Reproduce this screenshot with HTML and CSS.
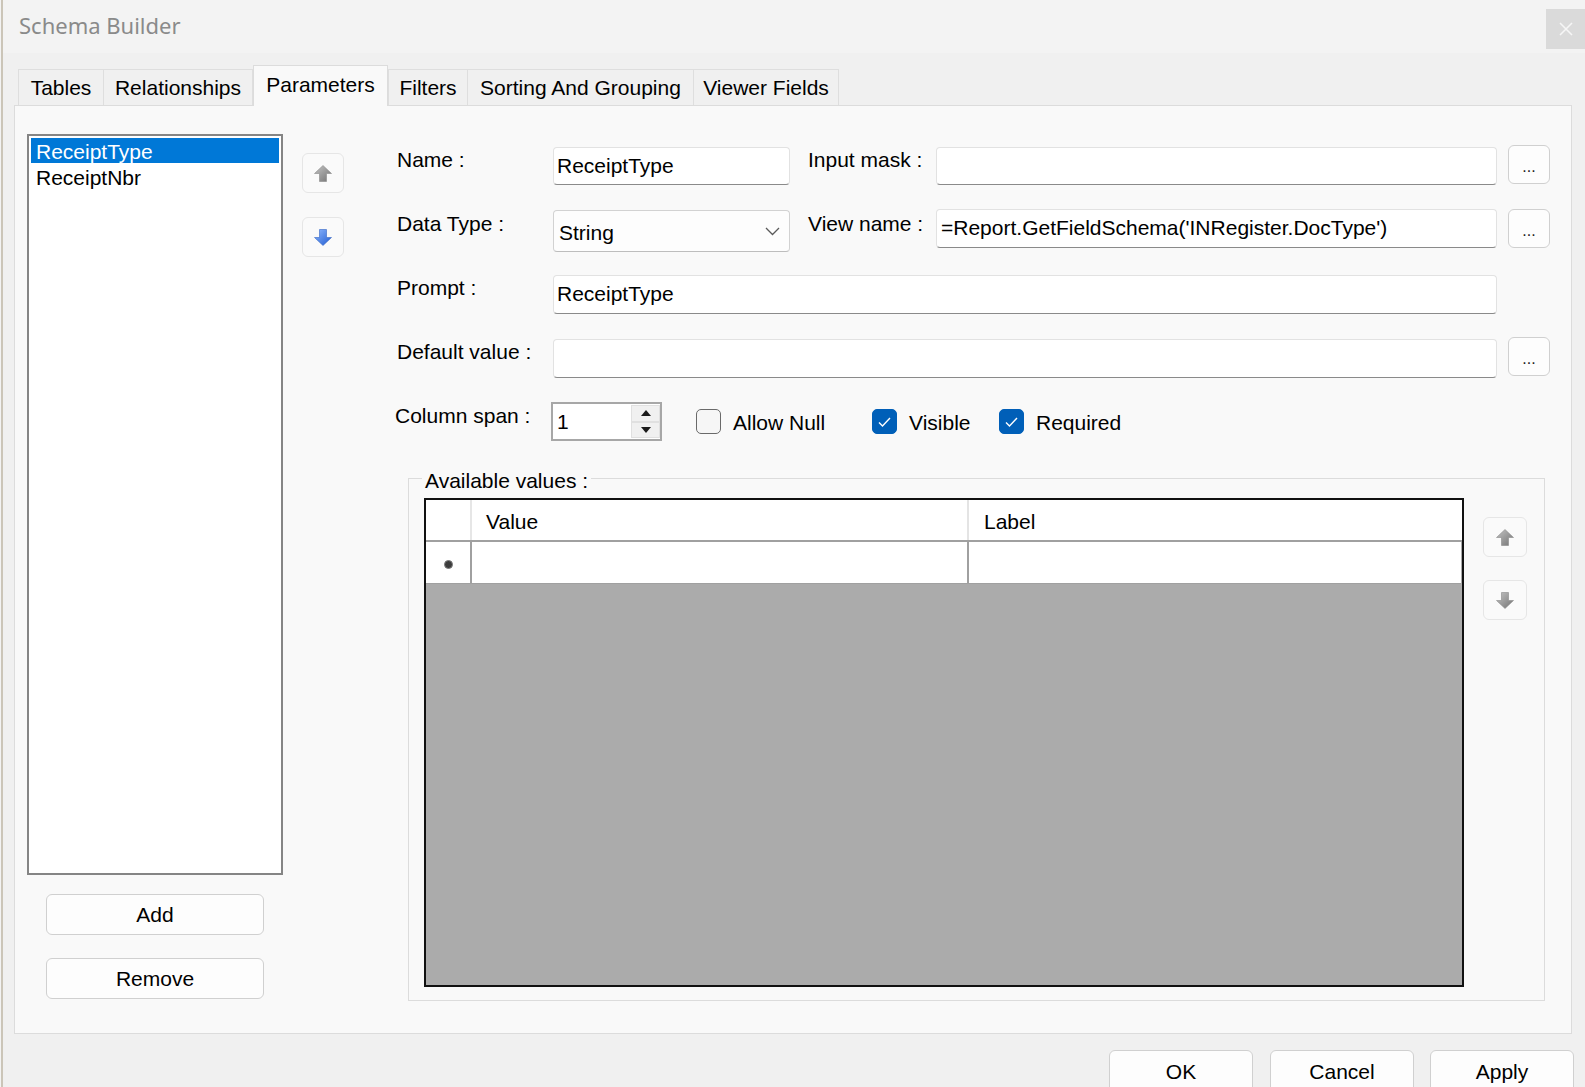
FILE: index.html
```html
<!DOCTYPE html>
<html lang="en">
<head>
<meta charset="utf-8">
<title>Schema Builder</title>
<link rel="stylesheet" href="styles.css">
</head>
<body>
<div class="window">
  <div class="titlebar">
    <span class="title">Schema Builder</span>
    <div class="close">
      <svg width="14" height="14" viewBox="0 0 14 14"><path d="M1 1 L13 13 M13 1 L1 13" stroke="#f6f6f6" stroke-width="1.6" fill="none"/></svg>
    </div>
  </div>

  <div class="tabs">
    <div class="tab tab-tables">Tables</div>
    <div class="tab tab-rel">Relationships</div>
    <div class="tab tab-params active">Parameters</div>
    <div class="tab tab-filters">Filters</div>
    <div class="tab tab-sort">Sorting And Grouping</div>
    <div class="tab tab-viewer">Viewer Fields</div>
  </div>

  <div class="panel">
    <div class="left-col">
      <div class="listbox">
        <div class="item selected">ReceiptType</div>
        <div class="item">ReceiptNbr</div>
      </div>
      <div class="btn side-btn add">Add</div>
      <div class="btn side-btn remove">Remove</div>
    </div>

    <div class="arrow-col">
      <div class="arrow-btn">
        <svg width="18" height="17" viewBox="0 0 18 17"><defs><linearGradient id="ga" x1="0" y1="0" x2="1" y2="1"><stop offset="0" stop-color="#c4c4c4"/><stop offset="1" stop-color="#727272"/></linearGradient></defs><polygon points="9,0.5 17.5,8.5 12.5,8.5 12.5,16.5 5.5,16.5 5.5,8.5 0.5,8.5" fill="url(#ga)" stroke="#8a8a8a" stroke-width="0.6"/></svg>
      </div>
      <div class="arrow-btn">
        <svg width="18" height="17" viewBox="0 0 18 17"><defs><linearGradient id="gb" x1="0" y1="0" x2="1" y2="1"><stop offset="0" stop-color="#8fb8ff"/><stop offset="1" stop-color="#1f5bd0"/></linearGradient></defs><polygon points="5.5,0.5 12.5,0.5 12.5,8.5 17.5,8.5 9,16.5 0.5,8.5 5.5,8.5" fill="url(#gb)" stroke="#3667c4" stroke-width="0.6"/></svg>
      </div>
    </div>

    <div class="form">
      <div class="form-grid">
        <div class="lbl">Name :</div>
        <div class="field">ReceiptType</div>
        <div class="lbl lbl2">Input mask :</div>
        <div class="field"></div>
        <div class="btn dots">...</div>

        <div class="lbl">Data Type :</div>
        <div class="combo"><span>String</span>
          <svg width="15" height="9" viewBox="0 0 15 9"><polyline points="1,1 7.5,7.5 14,1" fill="none" stroke="#5a5a5a" stroke-width="1.3"/></svg>
        </div>
        <div class="lbl lbl2">View name :</div>
        <div class="field field-up">=Report.GetFieldSchema('INRegister.DocType')</div>
        <div class="btn dots">...</div>

        <div class="lbl">Prompt :</div>
        <div class="field field-wide">ReceiptType</div>

        <div class="lbl">Default value :</div>
        <div class="field field-wide"></div>
        <div class="btn dots">...</div>

        <div class="lbl lbl-span">Column span :</div>
        <div class="opts">
          <div class="spin">
            <div class="spin-val">1</div>
            <div class="spin-btns">
              <div class="spin-b"><svg width="10" height="6" viewBox="0 0 10 6"><polygon points="5,0 10,6 0,6" fill="#1a1a1a"/></svg></div>
              <div class="spin-b"><svg width="10" height="6" viewBox="0 0 10 6"><polygon points="0,0 10,0 5,6" fill="#1a1a1a"/></svg></div>
            </div>
          </div>
          <div class="check check-null"><span class="box"></span><span class="check-text">Allow Null</span></div>
          <div class="check check-visible"><span class="box on"><svg width="15" height="12" viewBox="0 0 15 12"><polyline points="2,6.5 5.5,10 13,2" fill="none" stroke="#fff" stroke-width="1.4"/></svg></span><span class="check-text">Visible</span></div>
          <div class="check"><span class="box on"><svg width="15" height="12" viewBox="0 0 15 12"><polyline points="2,6.5 5.5,10 13,2" fill="none" stroke="#fff" stroke-width="1.4"/></svg></span><span class="check-text">Required</span></div>
        </div>
      </div>

      <div class="group">
        <div class="group-label">Available values :</div>
        <div class="group-body">
          <div class="grid">
            <div class="grow ghead">
              <div class="gc rh"></div>
              <div class="gc gval">Value</div>
              <div class="gc glab">Label</div>
            </div>
            <div class="grow gdata">
              <div class="gc rh"><span class="dot"></span></div>
              <div class="gc gval"></div>
              <div class="gc glab"></div>
            </div>
          </div>
          <div class="grid-side">
            <div class="arrow-btn wide">
              <svg width="18" height="17" viewBox="0 0 18 17"><defs><linearGradient id="gc" x1="0" y1="0" x2="1" y2="1"><stop offset="0" stop-color="#c4c4c4"/><stop offset="1" stop-color="#727272"/></linearGradient></defs><polygon points="9,0.5 17.5,8.5 12.5,8.5 12.5,16.5 5.5,16.5 5.5,8.5 0.5,8.5" fill="url(#gc)" stroke="#8a8a8a" stroke-width="0.6"/></svg>
            </div>
            <div class="arrow-btn wide">
              <svg width="18" height="17" viewBox="0 0 18 17"><defs><linearGradient id="gd" x1="0" y1="0" x2="1" y2="1"><stop offset="0" stop-color="#c4c4c4"/><stop offset="1" stop-color="#727272"/></linearGradient></defs><polygon points="5.5,0.5 12.5,0.5 12.5,8.5 17.5,8.5 9,16.5 0.5,8.5 5.5,8.5" fill="url(#gd)" stroke="#8a8a8a" stroke-width="0.6"/></svg>
            </div>
          </div>
        </div>
      </div>
    </div>
  </div>

  <div class="footer">
    <div class="btn foot-btn ok">OK</div>
    <div class="btn foot-btn">Cancel</div>
    <div class="btn foot-btn">Apply</div>
  </div>
</div>
</body>
</html>
```

FILE: styles.css
```css
* { box-sizing: border-box; }
html, body { margin: 0; padding: 0; }
body {
  width: 1585px;
  height: 1087px;
  overflow: hidden;
  background: #f3f3f3;
  font-family: "Liberation Sans", Arial, sans-serif;
  font-size: 21px;
  color: #000;
}
.window {
  margin-left: 1px;
  width: 1584px;
  height: 1087px;
  border-left: 2px solid #cbc5b8;
  background: #f0f0f0;
}

/* title bar */
.titlebar {
  height: 53px;
  background: #f3f3f3;
  display: flex;
  align-items: flex-start;
}
.title {
  font-family: "Noto Sans", sans-serif;
  font-size: 22px;
  line-height: 30px;
  padding: 10px 0 0 16px;
  color: #8a8a8a;
}
.close {
  margin-left: auto;
  margin-top: 9px;
  width: 39px;
  height: 40px;
  background: #dadada;
  display: flex;
  align-items: center;
  justify-content: center;
}

/* tabs */
.tabs {
  display: flex;
  align-items: flex-end;
  height: 52px;
  padding-left: 15px;
}
.tab {
  height: 36px;
  line-height: 35px;
  text-align: center;
  border: 1px solid #dedede;
  border-bottom: none;
  background: #f0f0f0;
  white-space: nowrap;
}
.tab-tables { width: 86px; }
.tab-rel { width: 149px; border-left: none; }
.tab-params { width: 135px; }
.tab-filters { width: 80px; }
.tab-sort { width: 226px; border-left: none; }
.tab-viewer { width: 145px; border-left: none; }
.tab.active {
  height: 41px;
  margin-bottom: -1px;
  padding-top: 1px;
  background: #f9f9f9;
  border-color: #dcdcdc;
  position: relative;
  z-index: 1;
}

/* panel */
.panel {
  margin-left: 11px;
  width: 1558px;
  height: 929px;
  border: 1px solid #dcdcdc;
  background: #f9f9f9;
  display: flex;
  align-items: flex-start;
  padding: 28px 0 0 12px;
}
.left-col {
  width: 256px;
  display: flex;
  flex-direction: column;
}
.listbox {
  height: 741px;
  border: 2px solid #858585;
  background: #fff;
  padding: 2px;
}
.item {
  height: 26px;
  line-height: 27px;
  padding-left: 5px;
  white-space: nowrap;
}
.item.selected {
  background: #0078d7;
  color: #fff;
  height: 25px;
  margin-bottom: 1px;
}

.btn {
  background: #fdfdfd;
  border: 1px solid #d0d0d0;
  border-radius: 6px;
  text-align: center;
}
.side-btn {
  margin-left: 19px;
  width: 218px;
  height: 41px;
  line-height: 39px;
}
.add { margin-top: 19px; }
.remove { margin-top: 23px; }

.arrow-col {
  margin-left: 19px;
  margin-top: 19px;
  width: 42px;
  display: flex;
  flex-direction: column;
  gap: 24px;
}
.arrow-btn {
  width: 42px;
  height: 40px;
  background: #fafafa;
  border: 1px solid #e6e6e6;
  border-radius: 6px;
  display: flex;
  align-items: center;
  justify-content: center;
}
.arrow-btn.wide { width: 44px; }

/* form */
.form {
  margin-left: 53px;
  margin-top: 13px;
  width: 1153px;
}
.form-grid {
  display: grid;
  grid-template-columns: 156px 237px 146px 561px 53px;
  grid-template-rows: 64px 64px 64px 64px 40px;
  align-items: start;
}
.lbl {
  line-height: 24px;
  padding-top: 1px;
  white-space: nowrap;
  grid-column: 1;
}
.lbl2 { grid-column: 3; padding-left: 18px; }
.lbl-span { margin-left: -2px; }
.field {
  height: 38px;
  line-height: 36px;
  background: #fff;
  border: 1px solid #e2e2e2;
  border-bottom-color: #8a8a8a;
  border-radius: 4px;
  padding-left: 3px;
  white-space: nowrap;
  overflow: hidden;
}
.field-up { margin-top: -2px; height: 39px; padding-left: 4px; }
.field-wide { grid-column: 2 / 5; height: 39px; }
.combo {
  margin-top: -1px;
  height: 42px;
  background: #fdfdfd;
  border: 1px solid #d2d2d2;
  border-bottom-color: #bdbdbd;
  border-radius: 4px;
  display: flex;
  align-items: center;
  justify-content: space-between;
  padding: 3px 9px 0 5px;
}
.combo svg { margin-top: -3px; }
.dots {
  grid-column: 5;
  justify-self: end;
  width: 42px;
  height: 39px;
  margin-top: -2px;
  font-size: 16px;
  line-height: 30px;
  padding-top: 6px;
  color: #222;
}

.opts {
  grid-column: 2 / 6;
  display: flex;
  align-items: center;
  height: 39px;
  margin-top: -1px;
}
.spin {
  margin-left: -2px;
  width: 111px;
  height: 39px;
  border: 2px solid #a7a7a7;
  background: #fff;
  display: flex;
}
.spin-val {
  flex: 1;
  padding-left: 4px;
  line-height: 35px;
}
.spin-btns {
  width: 29px;
  display: flex;
  flex-direction: column;
  padding: 1px 0 1px 0;
}
.spin-b {
  flex: 1;
  background: #f0f0f0;
  border: 1px solid #e0e0e0;
  display: flex;
  align-items: center;
  justify-content: center;
}
.check {
  display: flex;
  align-items: center;
  gap: 12px;
  height: 39px;
}
.check-null { margin-left: 34px; width: 176px; }
.check-visible { width: 127px; }
.box {
  width: 25px;
  height: 25px;
  border: 1.5px solid #6a6a6a;
  border-radius: 5px;
  background: #f6f6f6;
  display: flex;
  align-items: center;
  justify-content: center;
}
.box.on {
  background: #005fb8;
  border-color: #005fb8;
}
.check-text {
  padding-top: 3px;
  white-space: nowrap;
}

/* group box */
.group {
  margin-top: 35px;
  margin-left: 11px;
  width: 1137px;
  height: 523px;
  border: 1px solid #dcdcdc;
}
.group-label {
  width: fit-content;
  margin-top: -10px;
  margin-left: 13px;
  padding: 0 3px;
  line-height: 24px;
  background: #f9f9f9;
}
.group-body {
  display: flex;
  align-items: flex-start;
  margin-top: 5px;
  padding-left: 15px;
}
.grid {
  width: 1040px;
  height: 489px;
  border: 2px solid #111;
  background: #ababab;
}
.grow {
  display: flex;
  background: #fff;
}
.ghead {
  height: 42px;
  border-bottom: 2px solid #a0a0a0;
}
.gdata {
  height: 42px;
  border-bottom: 1px solid #a0a0a0;
  margin-right: 1px;
}
.gc {
  padding-top: 4px;
  line-height: 36px;
}
.rh {
  width: 46px;
  border-right: 2px solid #a0a0a0;
  display: flex;
  align-items: center;
  justify-content: center;
  padding-top: 0;
}
.ghead .rh { border-right-color: #e6e6e6; }
.gdata .rh { padding-top: 4px; }
.gval {
  width: 497px;
  border-right: 2px solid #a0a0a0;
  padding-left: 14px;
}
.ghead .gval { border-right-color: #e4e4e4; }
.glab {
  flex: 1;
  padding-left: 15px;
}
.dot {
  width: 9px;
  height: 9px;
  border-radius: 50%;
  background: #3c3c3c;
  border: 1px solid #7a7a7a;
}
.grid-side {
  margin-left: 19px;
  margin-top: 19px;
  display: flex;
  flex-direction: column;
  gap: 23px;
}

/* footer */
.footer {
  display: flex;
  justify-content: flex-end;
  gap: 16px;
  margin-top: 16px;
  padding-right: 11px;
}
.foot-btn {
  width: 144px;
  height: 44px;
  line-height: 42px;
}
.ok { margin-right: 1px; }
```
